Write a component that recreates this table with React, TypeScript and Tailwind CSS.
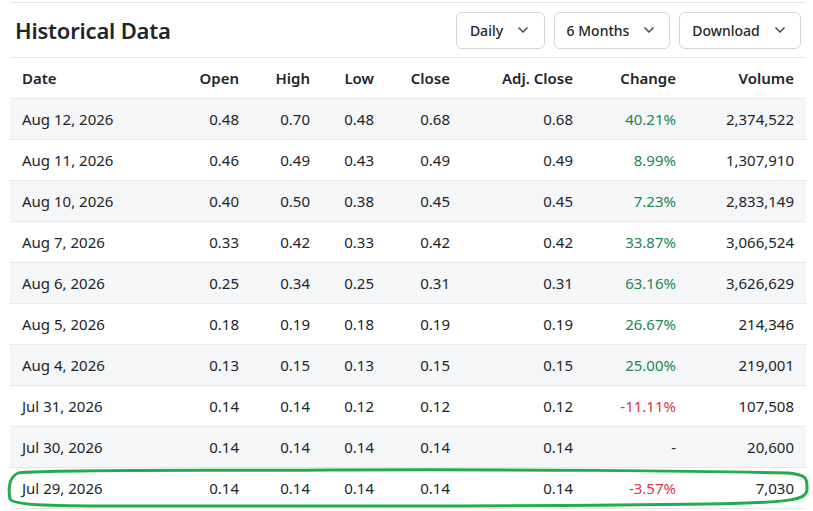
import { ChevronDown } from "lucide-react";

type Row = {
    date: string;
    open: string;
    high: string;
    low: string;
    close: string;
    adj: string;
    change: string;
    volume: string;
};

const rows: Row[] = [
    { date: "Aug 12, 2026", open: "0.48", high: "0.70", low: "0.48", close: "0.68", adj: "0.68", change: "40.21%", volume: "2,374,522" },
    { date: "Aug 11, 2026", open: "0.46", high: "0.49", low: "0.43", close: "0.49", adj: "0.49", change: "8.99%", volume: "1,307,910" },
    { date: "Aug 10, 2026", open: "0.40", high: "0.50", low: "0.38", close: "0.45", adj: "0.45", change: "7.23%", volume: "2,833,149" },
    { date: "Aug 7, 2026", open: "0.33", high: "0.42", low: "0.33", close: "0.42", adj: "0.42", change: "33.87%", volume: "3,066,524" },
    { date: "Aug 6, 2026", open: "0.25", high: "0.34", low: "0.25", close: "0.31", adj: "0.31", change: "63.16%", volume: "3,626,629" },
    { date: "Aug 5, 2026", open: "0.18", high: "0.19", low: "0.18", close: "0.19", adj: "0.19", change: "26.67%", volume: "214,346" },
    { date: "Aug 4, 2026", open: "0.13", high: "0.15", low: "0.13", close: "0.15", adj: "0.15", change: "25.00%", volume: "219,001" },
    { date: "Jul 31, 2026", open: "0.14", high: "0.14", low: "0.12", close: "0.12", adj: "0.12", change: "-11.11%", volume: "107,508" },
    { date: "Jul 30, 2026", open: "0.14", high: "0.14", low: "0.14", close: "0.14", adj: "0.14", change: "-", volume: "20,600" },
    { date: "Jul 29, 2026", open: "0.14", high: "0.14", low: "0.14", close: "0.14", adj: "0.14", change: "-3.57%", volume: "7,030" },
];

const cols = "grid grid-cols-[170px_71px_71px_64px_76px_123px_103px_118px]";

const Dropdown = (props: { text: string; width: string }) => {
    return (
        <button className={`flex h-[37px] items-center justify-center gap-3 rounded-md border border-[#d3d6db] bg-white text-[14px] font-medium text-[#212529] ${props.width}`}>
            {props.text}
            <ChevronDown className="h-4 w-4 text-[#495057]" strokeWidth={2.5} />
        </button>
    );
};

const changeColor = (c: string) => {
    if (c === "-") return "text-[#212529]";
    if (c.startsWith("-")) return "text-[#dc3545]";
    return "text-[#198754]";
};

export default function App() {
    return (
        <div className="h-[511px] w-[813px] bg-white pt-[2px] font-['Noto_Sans',sans-serif] text-[#212529]">
            <div className="relative mx-[10px] w-[796px] border-t border-[#e5e7eb]">
                <div className="flex h-[55px] items-center justify-between border-b border-[#e5e7eb] pl-[5px] pr-[5px]">
                    <h2 className="text-[22px] font-semibold tracking-[-0.2px]">Historical Data</h2>
                    <div className="flex items-center gap-[9px]">
                        <Dropdown text="Daily" width="w-[89px]" />
                        <Dropdown text="6 Months" width="w-[116px]" />
                        <Dropdown text="Download" width="w-[122px]" />
                    </div>
                </div>

                <div className={`${cols} h-[41px] items-center border-b border-[#e5e7eb] text-[15px] font-semibold`}>
                    <div className="px-3 text-left">Date</div>
                    <div className="px-3 text-right">Open</div>
                    <div className="px-3 text-right">High</div>
                    <div className="px-3 text-right">Low</div>
                    <div className="px-3 text-right">Close</div>
                    <div className="px-3 text-right">Adj. Close</div>
                    <div className="px-3 text-right">Change</div>
                    <div className="px-3 text-right">Volume</div>
                </div>

                {rows.map((r, i) => (
                    <div
                        key={r.date}
                        className={`${cols} h-[41px] items-center border-b border-[#e5e7eb] text-[15px] ${i % 2 === 0 ? "bg-[#f5f6f8]" : "bg-white"}`}
                    >
                        <div className="px-3">{r.date}</div>
                        <div className="px-3 text-right">{r.open}</div>
                        <div className="px-3 text-right">{r.high}</div>
                        <div className="px-3 text-right">{r.low}</div>
                        <div className="px-3 text-right">{r.close}</div>
                        <div className="px-3 text-right">{r.adj}</div>
                        <div className={`px-3 text-right ${changeColor(r.change)}`}>{r.change}</div>
                        <div className="px-3 text-right">{r.volume}</div>
                    </div>
                ))}

                {/* hand drawn highlight around the last row */}
                <svg
                    className="pointer-events-none absolute left-[-4px] top-[464px]"
                    width="806"
                    height="46"
                    viewBox="0 0 806 46"
                    fill="none"
                >
                    <path
                        d="M12 6 C 60 2, 200 4, 320 3 C 500 2, 700 4, 782 6 C 802 8, 801 12, 801 22 C 801 32, 790 36, 700 37 C 500 40, 300 39, 110 39 C 40 39, 8 38, 4 32 C 2 22, 3 10, 12 6 Z"
                        stroke="#22ad4d"
                        strokeWidth="3"
                    />
                </svg>
            </div>
        </div>
    );
}
